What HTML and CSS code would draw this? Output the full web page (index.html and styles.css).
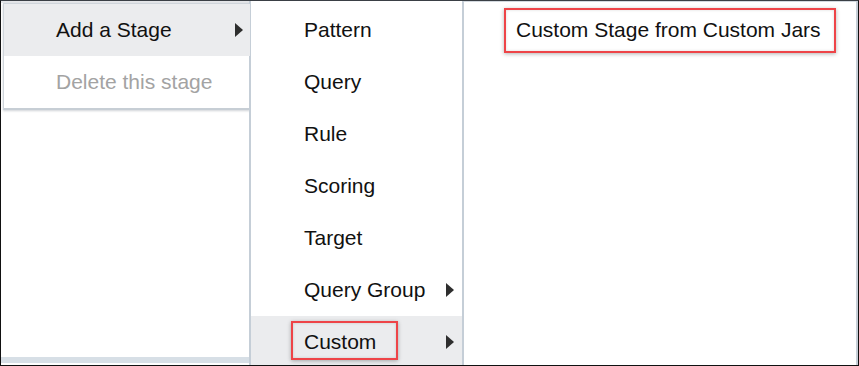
FILE: index.html
```html
<!DOCTYPE html>
<html>
<head>
<meta charset="utf-8">
<link rel="stylesheet" href="styles.css">
</head>
<body>
<div class="frame">
  <div class="col col-left">
    <div class="menu menu-main">
      <div class="item active">Add a Stage<span class="arrow"></span></div>
      <div class="item disabled">Delete this stage</div>
    </div>
    <div class="spacer"></div>
    <div class="band"></div>
  </div>
  <div class="col menu-sub">
    <div class="item">Pattern</div>
    <div class="item">Query</div>
    <div class="item">Rule</div>
    <div class="item">Scoring</div>
    <div class="item">Target</div>
    <div class="item">Query Group<span class="arrow"></span></div>
    <div class="item active">Custom<span class="arrow"></span><span class="mark mark-custom"></span></div>
  </div>
  <div class="col menu-third">
    <div class="item">Custom Stage from Custom Jars<span class="mark mark-jars"></span></div>
  </div>
</div>
</body>
</html>
```

FILE: styles.css
```css
html, body {
  margin: 0;
  padding: 0;
  background: #ffffff;
}
.frame {
  box-sizing: border-box;
  width: 859px;
  height: 366px;
  border: 1px solid #111;
  display: flex;
  overflow: hidden;
  font-family: "Liberation Sans", Arial, sans-serif;
  font-size: 21px;
  color: #111;
  background: #fff;
  border-top: 1px solid #3a3f45;
}
.col {
  display: flex;
  flex-direction: column;
  padding-top: 2px;
  background: #fff;
}
.col-left {
  width: 248px;
  flex: none;
  background: linear-gradient(#e4e6e9 0, #e4e6e9 2px, #fff 2px);
}
.menu-main {
  margin-left: 2px;
  width: 246px;
  border: 1px solid #cfd5db;
  border-right: none;
  border-bottom: 2px solid #c7ced5;
  box-shadow: 0 1px 2px rgba(120,130,140,0.35);
  background: #fff;
}
.item {
  position: relative;
  height: 52px;
  display: flex;
  align-items: center;
  flex: none;
}
.menu-main .item {
  padding-left: 52px;
}
.item.active {
  background: #ebecee;
}
.item.disabled {
  color: #a3a3a3;
}
.spacer {
  flex: 1;
}
.band {
  height: 6px;
  margin-bottom: 2px;
  background: #d7dfe6;
}
.arrow {
  position: absolute;
  width: 0;
  height: 0;
  border-top: 7px solid transparent;
  border-bottom: 7px solid transparent;
  border-left: 8px solid #2e2e2e;
}
.menu-main .arrow {
  left: 231px;
  top: 19px;
}
.menu-sub {
  box-sizing: border-box;
  width: 215px;
  flex: none;
  border-left: 2px solid #c5ced7;
  border-right: 2px solid #c5ced7;
  padding-top: 3px;
}
.menu-sub .item {
  padding-left: 53px;
}
.menu-sub .arrow {
  left: 195px;
  top: 19px;
}
.menu-third {
  flex: 1;
  border-right: 2px solid #c5ced7;
  padding-top: 3px;
  box-shadow: inset 0 1px 0 #d3d9df;
}
.menu-third .item {
  padding-left: 52px;
}
.mark {
  position: absolute;
  box-sizing: border-box;
  border: 2px solid #ee4448;
  box-shadow: 0 1px 4px rgba(0,0,0,0.3), inset 0 0 3px rgba(0,0,0,0.15);
  pointer-events: none;
}
.mark-custom {
  left: 40px;
  top: 5px;
  width: 107px;
  height: 39px;
}
.mark-jars {
  left: 40px;
  top: 4px;
  width: 332px;
  height: 45px;
}
```
